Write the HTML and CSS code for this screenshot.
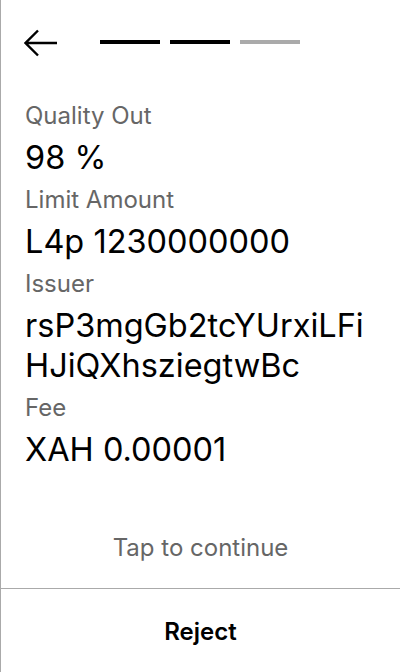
FILE: index.html
```html
<!DOCTYPE html>
<html>
<head>
<meta charset="utf-8">
<link rel="stylesheet" href="styles.css">
</head>
<body>
<div class="screen">
  <header class="top">
    <svg class="back" width="34" height="30" viewBox="0 0 34 30">
      <path d="M33 15H2M14 2.5L1.5 15L14 27.5" fill="none" stroke="#000" stroke-width="2.4"/>
    </svg>
    <div class="steps">
      <span class="step on"></span>
      <span class="step on"></span>
      <span class="step"></span>
    </div>
  </header>
  <main class="fields">
    <div class="label">Quality Out</div>
    <div class="value">98 %</div>
    <div class="label">Limit Amount</div>
    <div class="value">L4p 1230000000</div>
    <div class="label">Issuer</div>
    <div class="value">rsP3mgGb2tcYUrxiLFi<br>HJiQXhsziegtwBc</div>
    <div class="label">Fee</div>
    <div class="value">XAH 0.00001</div>
  </main>
  <div class="tap">Tap to continue</div>
  <footer class="bottom">
    <div class="reject">Reject</div>
  </footer>
</div>
</body>
</html>
```
FILE: styles.css
```css
html, body {
  margin: 0;
  padding: 0;
  background: #fff;
}
body {
  font-family: Inter, "Noto Sans", sans-serif;
  color: #000;
}
.screen {
  width: 399px;
  height: 672px;
  border-left: 1px solid #aaaaaa;
  display: flex;
  flex-direction: column;
  box-sizing: content-box;
}
.top {
  height: 94px;
  display: flex;
  align-items: flex-start;
  padding-left: 23px;
  box-sizing: border-box;
}
.back {
  margin-top: 28px;
  display: block;
}
.steps {
  display: flex;
  gap: 10px;
  margin-left: 42px;
  margin-top: 40px;
}
.step {
  width: 60px;
  height: 4px;
  background: #aaaaaa;
}
.step.on {
  background: #000;
}
.fields {
  padding-left: 24px;
}
.label {
  height: 44px;
  line-height: 44px;
  font-size: 24px;
  color: #666666;
}
.value {
  line-height: 40px;
  font-size: 32.5px;
  color: #000;
}
.tap {
  flex: 1;
  display: flex;
  align-items: flex-end;
  justify-content: center;
  padding-bottom: 26px;
  font-size: 24px;
  color: #666666;
}
.bottom {
  height: 84px;
  border-top: 1px solid #aaaaaa;
  display: flex;
  align-items: center;
  justify-content: center;
  box-sizing: border-box;
}
.reject {
  font-size: 24px;
  font-weight: 600;
  margin-top: 2px;
}
```
